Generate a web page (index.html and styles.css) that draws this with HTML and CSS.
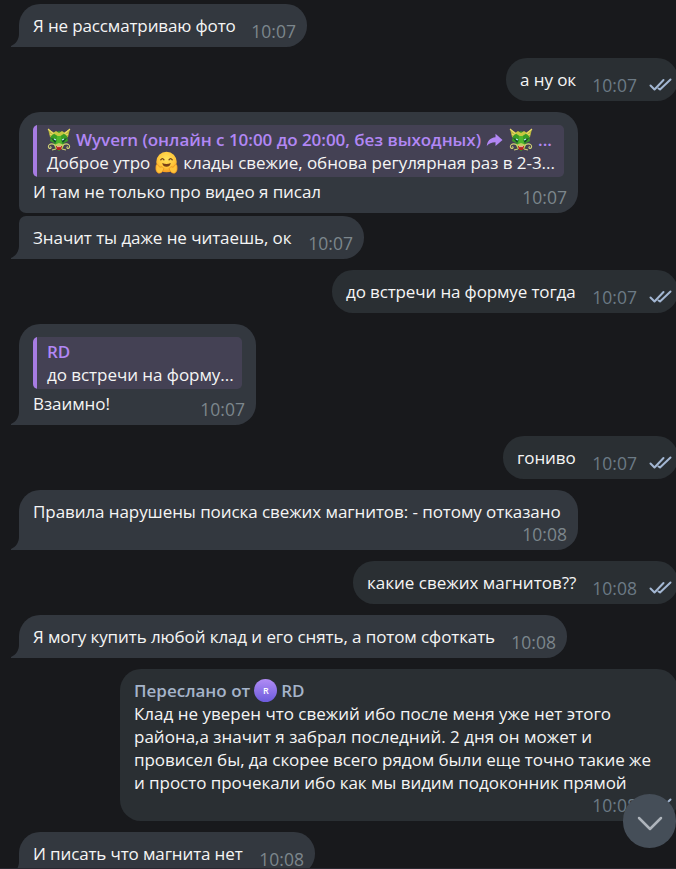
FILE: index.html
```html
<!DOCTYPE html>
<html lang="ru">
<head>
<meta charset="utf-8">
<title>Чат</title>
<link rel="stylesheet" href="styles.css">
</head>
<body>
<svg class="defs" width="0" height="0">
  <defs>
    <symbol id="tail" viewBox="0 0 9 20"><path d="M9 0V20H0V19C5 17 8 12 8 7V0Z" fill="#33383f"/></symbol>
    <symbol id="checks" viewBox="0 0 24 14"><path d="M1.5 7.5L5.5 11.5L14.5 2M9.5 10.5L11 11.5L21.5 1.5" fill="none" stroke="#a3b7d3" stroke-width="2" stroke-linecap="round" stroke-linejoin="round"/></symbol>
    <symbol id="dragon" viewBox="0 0 24 24">
      <path d="M1 1L6 4L9 7L7 11L3 9Z M23 1L18 4L15 7L17 11L21 9Z" fill="#b9b83c"/>
      <path d="M1 1L8 7M3 6L8 9M23 1L16 7M21 6L16 9" fill="none" stroke="#eadb69" stroke-width="1.2"/>
      <path d="M4 8L8 5L12 3L16 5L20 8L21 13L17 15L16 20L12 23L8 20L7 15L3 13Z" fill="#399c26"/>
      <path d="M6 5L9 3L12 5L15 3L18 5L12 9Z" fill="#c6c940"/>
      <path d="M4 10L10 12L8 15Z M20 10L14 12L16 15Z" fill="#154e29"/>
      <path d="M7 11L9 12M17 11L15 12" stroke="#b8f3ff" stroke-width="1.3"/>
      <path d="M10 8H14L15 16L12 18L9 16Z" fill="#4eb72c"/>
      <path d="M7 17L12 15L17 17L15 21H9Z" fill="#c2cd62"/>
      <path d="M9 18H15L14 22H10Z" fill="#b52320"/>
      <path d="M10 18L11 19.5L12 18L13 19.5L14 18" fill="#fff1d1"/>
      <path d="M8 17C3 14 0 18 2 20C4 22 5 18 3 19M5 22L9 21M16 17C21 14 24 18 22 20C20 22 19 18 21 19M19 22L15 21" fill="none" stroke="#ced075" stroke-width="1.1"/>
    </symbol>
    <radialGradient id="skin" cx=".5" cy=".35" r=".65"><stop offset="0" stop-color="#ffe45c"/><stop offset=".65" stop-color="#ffc53a"/><stop offset="1" stop-color="#f59a22"/></radialGradient>
  </defs>
</svg>
<main class="chat">
  <div class="msg in w288"><svg class="tail"><use href="#tail"/></svg><p class="snug">Я не рассматриваю фото</p><time>10:07</time></div>
  <div class="msg out w172"><p>а ну ок</p><time>10:07</time><svg class="checks"><use href="#checks"/></svg></div>
  <div class="msg in stacked w559 group-first">
    <div class="quote">
      <div class="quote-name"><svg class="emoji"><use href="#dragon"/></svg><span class="title">Wyvern (онлайн с 10:00 до 20:00, без выходных)</span><svg class="forward" viewBox="0 0 17 14"><path d="M9.5 .8L16.5 7L9.5 13V9.3C5.5 9.3 3 10.4 .8 13C1.2 8.3 4 4.8 9.5 4.3Z" fill="#b287f5"/></svg><svg class="emoji"><use href="#dragon"/></svg><span class="dots">...</span></div>
      <div class="quote-text"><span class="hello">Доброе утро</span><svg class="emoji hug" viewBox="0 0 24 24"><circle cx="12" cy="11.5" r="10.7" fill="url(#skin)"/><path d="M6 9.2Q7.7 6.5 9.4 9.2M14.6 9.2Q16.3 6.5 18 9.2" fill="none" stroke="#70431c" stroke-width="1.3" stroke-linecap="round"/><path d="M7.5 12.5Q12 14.5 16.5 12.5Q15.5 16.5 12 16.5Q8.5 16.5 7.5 12.5Z" fill="#774016"/><g fill="#ffc43a" stroke="#e5861c" stroke-width=".6"><path d="M1 15Q2 13 3.5 15L5 17Q8 15.5 8.5 17.5Q10 18.5 8.5 20Q7 24 3 23Q0 21 1 15Z"/><path d="M23 15Q22 13 20.5 15L19 17Q16 15.5 15.5 17.5Q14 18.5 15.5 20Q17 24 21 23Q24 21 23 15Z"/></g></svg><span class="rest">клады свежие, обнова регулярная раз в 2-3...</span></div>
    </div>
    <p>И там не только про видео я писал</p><time>10:07</time>
  </div>
  <div class="msg in w345 group-last"><svg class="tail"><use href="#tail"/></svg><p>Значит ты даже не читаешь, ок</p><time>10:07</time></div>
  <div class="msg out w346"><p class="snug">до встречи на формуе тогда</p><time>10:07</time><svg class="checks"><use href="#checks"/></svg></div>
  <div class="msg in stacked w237"><svg class="tail"><use href="#tail"/></svg>
    <div class="quote"><div class="quote-name"><span>RD</span></div><div class="quote-text"><span>до встречи на форму...</span></div></div>
    <p>Взаимно!</p><time>10:07</time>
  </div>
  <div class="msg out w175"><p>гониво</p><time>10:07</time><svg class="checks"><use href="#checks"/></svg></div>
  <div class="msg in tall w559"><svg class="tail"><use href="#tail"/></svg><p>Правила нарушены поиска свежих магнитов: - потому отказано</p><time>10:08</time></div>
  <div class="msg out w325"><p class="loose">какие свежих магнитов??</p><time>10:08</time><svg class="checks"><use href="#checks"/></svg></div>
  <div class="msg in w548"><svg class="tail"><use href="#tail"/></svg><p class="sync">Я могу купить любой клад и его снять, а потом сфоткать</p><time>10:08</time></div>
  <div class="msg out forwarded w558">
    <div class="from"><span>Переслано от</span><i class="avatar">R</i><span>RD</span></div>
    <p class="loose">Клад не уверен что свежий ибо после меня уже нет этого<br>района,а значит я забрал последний. 2 дня он может и<br><span class="body">провисел бы, да скорее всего рядом были еще точно такие же<br>и просто прочекали ибо как мы видим подоконник прямой</span></p>
    <time>10:08</time><svg class="checks"><use href="#checks"/></svg>
  </div>
  <div class="msg in w296"><svg class="tail"><use href="#tail"/></svg><p class="snug">И писать что магнита нет</p><time>10:08</time></div>
</main>
<button class="down" aria-label="Вниз"><svg viewBox="0 0 54 54"><path d="M16 24L27 35L38 24" fill="none" stroke="#aeb4bb" stroke-width="2.5" stroke-linecap="round" stroke-linejoin="round"/></svg></button>
</body>
</html>
```
FILE: styles.css
```css
* { box-sizing: border-box; }
body { margin: 0; background: #18191c; color: #f5f5f5; font: 17px/23px "Open Sans", "Noto Sans", sans-serif; }
p { margin: 0; white-space: nowrap; letter-spacing: -.075px; }
.snug { letter-spacing: -.13px; }
.sync { letter-spacing: -.095px; }
.loose { letter-spacing: 0; }
.body { letter-spacing: -.055px; }
.defs { position: absolute; }
.chat { height: 869px; overflow: hidden; padding: 4px 0 0 19px; display: flex; flex-direction: column; align-items: flex-start; gap: 11px; border-bottom: 1px solid #292830; }
.msg { position: relative; flex: none; height: 43px; padding: 10px 14px; border-radius: 21px; background: #33383f; }
.in { border-bottom-left-radius: 0; }
.out { align-self: flex-end; margin-right: -2px; background: #2a2f33; }
.stacked { height: 101px; padding-top: 13px; }
.tall { height: 60px; }
.forwarded { height: 152px; }
.group-first { border-bottom-left-radius: 7px; }
.group-last { border-top-left-radius: 7px; margin-top: -8px; }
.w172 { width: 172px; } .w175 { width: 175px; } .w237 { width: 237px; } .w288 { width: 288px; }
.w296 { width: 296px; } .w325 { width: 325px; } .w345 { width: 345px; } .w346 { width: 346px; }
.w548 { width: 548px; } .w558 { width: 558px; } .w559 { width: 559px; }
.tail { position: absolute; left: -8px; bottom: 0; width: 9px; height: 20px; }
time { position: absolute; right: 11px; bottom: 4px; color: #7c868c; font-size: 17.5px; letter-spacing: .04px; }
.out time { right: 41px; color: #6c7a85; }
.checks { position: absolute; right: 5px; bottom: 9px; width: 24px; height: 14px; }
.quote { height: 52px; margin-bottom: 3px; padding: 3px 8px 3px 14px; border-radius: 5px; background: linear-gradient(90deg, #a77ce2 4px, #444154 4px); white-space: nowrap; overflow: hidden; }
.quote-name, .from { display: flex; align-items: center; height: 23px; font-weight: 600; }
.quote-name { color: #b287f5; letter-spacing: -.03px; }
.quote-text { display: flex; align-items: center; height: 23px; letter-spacing: -.045px; }
.emoji { flex: none; width: 24px; height: 24px; }
.title { margin-left: 5px; }
.forward { flex: none; width: 17px; height: 14px; margin: 0 6px 0 5px; }
.dots { margin-left: 5px; }
.hug { width: 23px; height: 23px; margin: 0 5px; }
.from { color: #a5b4ca; }
.avatar { width: 23px; height: 23px; margin: 0 4px; border-radius: 50%; background: linear-gradient(#b18cf5, #6c5bdc); color: #fff; font: 600 9px/23px "Open Sans", sans-serif; text-align: center; }
.down { position: absolute; left: 623px; top: 794px; width: 53px; height: 54px; padding: 0; border: 0; border-radius: 27px; background: #454e58; overflow: hidden; }
.down svg { display: block; width: 54px; height: 54px; }
```
